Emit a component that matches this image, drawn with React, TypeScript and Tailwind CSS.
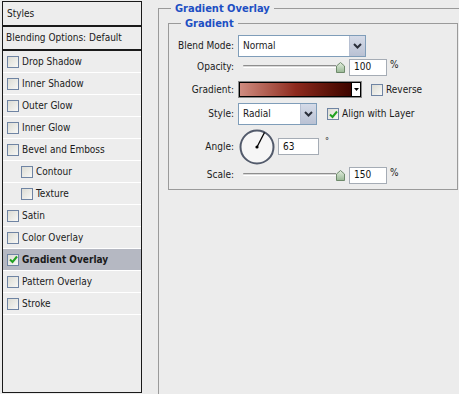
import React from "react";

const font = { fontFamily: '"DejaVu Sans Condensed", "DejaVu Sans", Tahoma, sans-serif' };

function Check({ checked = false }: { checked?: boolean }) {
  return (
    <div className="w-[12px] h-[12px] border border-[#6f84a3] bg-gradient-to-br from-[#dcdcd4] to-[#f8f8f6] flex items-center justify-center shrink-0">
      {checked && (
        <svg width="9" height="9" viewBox="0 0 9 9">
          <path d="M1 4.5 L3.5 7 L8 1.5" stroke="#21a121" strokeWidth="2" fill="none" />
        </svg>
      )}
    </div>
  );
}

function DropBtn({ w = 16 }: { w?: number }) {
  return (
    <div className="h-full border-l border-[#b7c0d2] bg-gradient-to-b from-[#d5dbe8] to-[#b9c1d3] flex items-center justify-center w-[16px]">
      <svg width="9" height="6" viewBox="0 0 9 6">
        <path d="M1 1 L4.5 4.5 L8 1" stroke="#2a2f3a" strokeWidth="2" fill="none" />
      </svg>
    </div>
  );
}

function Thumb() {
  return (
    <svg width="9" height="11" viewBox="0 0 9 11" className="shrink-0">
      <defs>
        <linearGradient id="tg" x1="0" y1="0" x2="0" y2="1">
          <stop offset="0" stopColor="#e4eee0" />
          <stop offset="1" stopColor="#98b894" />
        </linearGradient>
      </defs>
      <path d="M0.5 4 L4.5 0.5 L8.5 4 L8.5 10.5 L0.5 10.5 Z" fill="url(#tg)" stroke="#6f8a6c" />
    </svg>
  );
}

function Slider() {
  return (
    <div className="w-[107px] h-full flex items-center pl-[5px]">
      <div className="flex-1 h-[3px] border-t border-[#8e8e8e] border-b border-b-white bg-[#d8d8d8] mt-[-1px] rounded-l-[1px]" />
      <Thumb />
    </div>
  );
}

function TextBox({ value, w }: { value: string; w: string }) {
  return (
    <div className={`${w} h-[17px] border border-[#a5acb5] bg-white flex items-center pl-[4px] text-[10px] text-[#111]`}>
      {value}
    </div>
  );
}

const rows: { label: string; indent?: boolean; checked?: boolean; active?: boolean }[] = [
  { label: "Drop Shadow" },
  { label: "Inner Shadow" },
  { label: "Outer Glow" },
  { label: "Inner Glow" },
  { label: "Bevel and Emboss" },
  { label: "Contour", indent: true },
  { label: "Texture", indent: true },
  { label: "Satin" },
  { label: "Color Overlay" },
  { label: "Gradient Overlay", checked: true, active: true },
  { label: "Pattern Overlay" },
  { label: "Stroke" },
];

function Label({ children }: { children: React.ReactNode }) {
  return <div className="w-[65px] text-right shrink-0">{children}</div>;
}

export default function App() {
  return (
    <div
      className="w-[459px] h-[394px] bg-[#ececec] flex items-start overflow-hidden text-[10px] text-[#1a1a1a] leading-none"
      style={font}
    >
      {/* Left styles list */}
      <div className="ml-[2px] mt-[1px] w-[140px] h-[392px] border border-[#1a1a1a] bg-[#ededed] flex flex-col shrink-0">
        <div className="h-[25px] border-b-2 border-[#1a1a1a] flex items-center pl-[4px]">Styles</div>
        <div className="h-[24px] border-b-2 border-[#1a1a1a] flex items-center pl-[3px]">Blending Options: Default</div>
        {rows.map((r) => (
          <div
            key={r.label}
            className={`h-[22px] border-b border-white flex items-center ${r.indent ? "pl-[18px]" : "pl-[4px]"} ${
              r.active ? "bg-[#b5b8c2] font-bold" : ""
            }`}
          >
            <Check checked={r.checked} />
            <span className="ml-[3px]">{r.label}</span>
          </div>
        ))}
      </div>

      {/* Right settings */}
      <fieldset className="ml-[16px] mt-[2px] w-[320px] h-[420px] border border-[#9a9a9a] shrink-0">
        <legend className="ml-[12px] px-[4px] h-[13px] leading-[13px] text-[11px] font-bold text-[#1d4fc3]">
          Gradient Overlay
        </legend>
        <fieldset className="ml-[9px] mt-[2px] w-[290px] border border-[#9a9a9a] pb-[5px]">
          <legend className="ml-[12px] px-[4px] h-[13px] leading-[13px] text-[11px] font-bold text-[#1d4fc3]">
            Gradient
          </legend>
          <div className="flex flex-col pt-[5px]">
            {/* Blend Mode */}
            <div className="flex items-center h-[22px]">
              <Label>Blend Mode:</Label>
              <div className="ml-[4px] w-[128px] h-[22px] border border-[#7f9db9] bg-white flex items-center">
                <span className="flex-1 pl-[4px]">Normal</span>
                <DropBtn />
              </div>
            </div>
            {/* Opacity */}
            <div className="flex items-center h-[18px] mt-[1px]">
              <Label>Opacity:</Label>
              <div className="ml-[4px] flex items-center h-full">
                <Slider />
                <div className="ml-[4px]">
                  <TextBox value="100" w="w-[38px]" />
                </div>
                <span className="ml-[3px] mb-[4px]">%</span>
              </div>
            </div>
            {/* Gradient */}
            <div className="flex items-center h-[17px] mt-[5px]">
              <Label>Gradient:</Label>
              <div className="ml-[4px] w-[124px] h-[17px] border border-[#8a8a8a] p-0 flex">
                <div className="flex-1 border border-black flex">
                  <div className="flex-1 bg-gradient-to-r from-[#cf8c80] via-[#8e2a1e] to-[#3e0500]" />
                  <div className="w-[9px] border-l border-black bg-white flex items-center justify-center">
                    <svg width="5" height="3" viewBox="0 0 5 3">
                      <path d="M0 0 L5 0 L2.5 3 Z" fill="#000" />
                    </svg>
                  </div>
                </div>
              </div>
              <div className="ml-[9px]">
                <Check />
              </div>
              <span className="ml-[3px]">Reverse</span>
            </div>
            {/* Style */}
            <div className="flex items-center h-[22px] mt-[5px]">
              <Label>Style:</Label>
              <div className="ml-[4px] w-[79px] h-[22px] border border-[#7f9db9] bg-white flex items-center">
                <span className="flex-1 pl-[4px]">Radial</span>
                <DropBtn />
              </div>
              <div className="ml-[10px]">
                <Check checked />
              </div>
              <span className="ml-[3px]">Align with Layer</span>
            </div>
            {/* Angle */}
            <div className="flex items-center h-[35px] mt-[4px]">
              <Label>Angle:</Label>
              <svg width="36" height="36" viewBox="0 0 36 36" className="ml-[5px] shrink-0">
                <circle cx="18" cy="18" r="16.5" fill="#f6f6f6" stroke="#525a6b" strokeWidth="2" />
                <line x1="18" y1="18" x2="25.5" y2="3.5" stroke="#000" strokeWidth="1.3" />
                <circle cx="18" cy="18" r="1.6" fill="#000" />
              </svg>
              <div className="ml-[3px]">
                <TextBox value="63" w="w-[41px]" />
              </div>
              <span className="ml-[6px] mb-[10px] text-[9px]">°</span>
            </div>
            {/* Scale */}
            <div className="flex items-center h-[18px] mt-[2px]">
              <Label>Scale:</Label>
              <div className="ml-[4px] flex items-center h-full">
                <Slider />
                <div className="ml-[4px]">
                  <TextBox value="150" w="w-[38px]" />
                </div>
                <span className="ml-[3px] mb-[4px]">%</span>
              </div>
            </div>
          </div>
        </fieldset>
      </fieldset>
    </div>
  );
}
